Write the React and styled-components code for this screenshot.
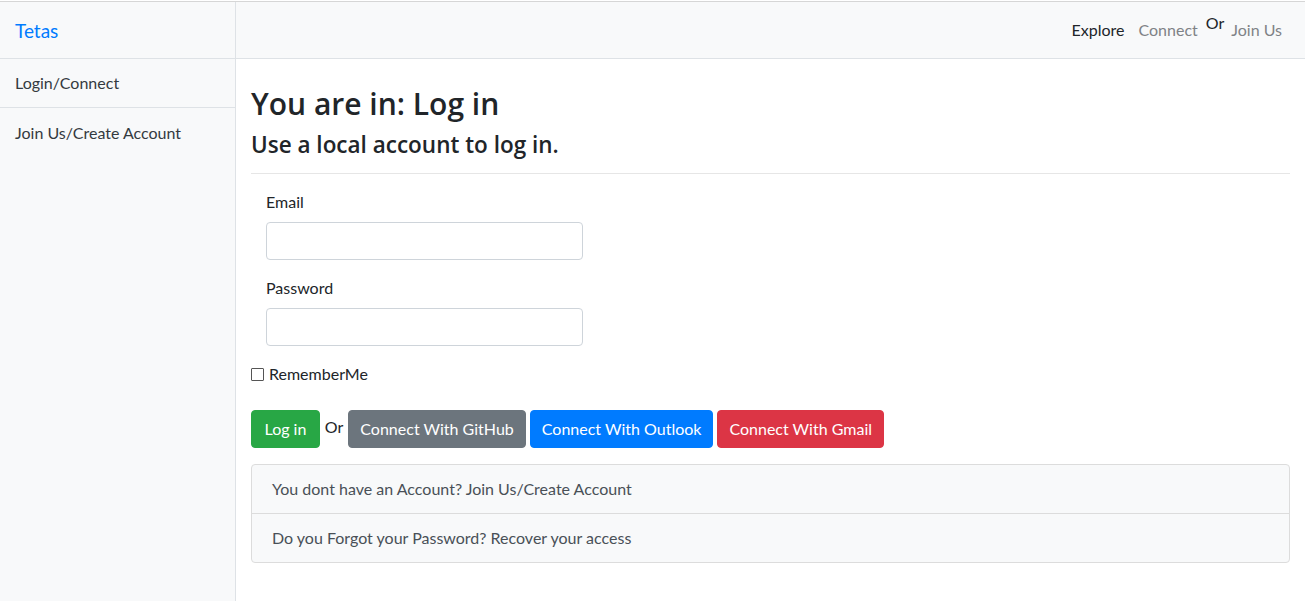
import React from "react";
import styled, { createGlobalStyle } from "styled-components";

const GlobalStyle = createGlobalStyle`
  html, body {
    margin: 0;
    padding: 0;
    background: #fff;
  }
  body {
    font-family: "Segoe UI", Lato, "Liberation Sans", sans-serif;
    font-size: 16px;
    line-height: 1.5;
    color: #212529;
    border-top: 1px solid #fff;
  }
  * {
    box-sizing: border-box;
  }
`;

const Page = styled.div`
  display: flex;
  min-height: 600px;
  border-top: 1px solid #d6d6d6;
`;

const Sidebar = styled.aside`
  width: 236px;
  flex-shrink: 0;
  background: #f8f9fa;
  border-right: 1px solid #dee2e6;
`;

const Brand = styled.div`
  height: 57px;
  display: flex;
  align-items: center;
  padding: 2px 0 0 15px;
  font-size: 19px;
  color: #007bff;
  border-bottom: 1px solid #dee2e6;
`;

const SideItem = styled.div`
  height: 49px;
  display: flex;
  align-items: center;
  padding-left: 15px;
  color: #343a40;
  border-bottom: ${(p) => (p.$last ? "none" : "1px solid #dee2e6")};
`;

const Right = styled.div`
  flex: 1;
  display: flex;
  flex-direction: column;
`;

const TopBar = styled.nav`
  height: 57px;
  background: #f8f9fa;
  border-bottom: 1px solid #dee2e6;
  display: flex;
  align-items: center;
  justify-content: flex-end;
  padding-right: 16px;
`;

const NavLink = styled.span`
  padding: 0 7px;
  color: ${(p) => (p.$active ? "#212529" : "#7f8286")};
`;

const NavOr = styled.span`
  position: relative;
  top: -7px;
  padding: 0 0 0 1px;
  color: #212529;
`;

const Content = styled.main`
  padding: 0 15px;
`;

const Title = styled.h2`
  margin: 27px 0 0;
  font-family: "Open Sans", Lato, sans-serif;
  font-size: 30px;
  font-weight: 600;
  line-height: 1.2;
`;

const Subtitle = styled.h4`
  margin: 9px 0 0;
  font-family: "Open Sans", Lato, sans-serif;
  font-size: 22.5px;
  font-weight: 600;
  line-height: 1.2;
`;

const Rule = styled.hr`
  margin: 15px 0 0;
  border: 0;
  border-top: 1px solid #e6e6e6;
`;

const Form = styled.form`
  padding: 16px 0 0;
`;

const Field = styled.div`
  padding: 0 15px;
  margin-bottom: 16px;
`;

const Label = styled.label`
  display: block;
  margin-bottom: 8px;
  color: #212529;
`;

const Input = styled.input`
  display: block;
  width: 317px;
  height: 38px;
  border: 1px solid #ced4da;
  border-radius: 4px;
  background: #fff;
  font: inherit;
  padding: 6px 12px;
`;

const Remember = styled.label`
  display: flex;
  align-items: center;
  gap: 5px;
  margin-top: 2px;
`;

const Box = styled.span`
  width: 13px;
  height: 13px;
  border: 1px solid #555;
  border-radius: 1px;
  background: #fff;
  display: inline-block;
`;

const Actions = styled.div`
  display: flex;
  align-items: center;
  gap: 4px;
  margin-top: 24px;
`;

const Button = styled.button`
  height: 38px;
  padding: 0 ${(p) => p.$px || 11}px;
  border: 1px solid ${(p) => p.$bg};
  background: ${(p) => p.$bg};
  color: #fff;
  border-radius: 4px;
  font: inherit;
`;

const Or = styled.span`
  position: relative;
  top: -2px;
  padding: 0 1px;
`;

const ListGroup = styled.div`
  margin-top: 16px;
  border: 1px solid #dcdcdc;
  border-radius: 4px;
  background: #f8f9fa;
`;

const ListItem = styled.div`
  height: ${(p) => (p.$last ? "48px" : "49px")};
  display: flex;
  align-items: center;
  padding-left: 20px;
  color: #495057;
  border-bottom: ${(p) => (p.$last ? "none" : "1px solid #dcdcdc")};
`;

export default function App() {
  return (
    <>
      <GlobalStyle />
      <Page>
        <Sidebar>
          <Brand>Tetas</Brand>
          <SideItem>Login/Connect</SideItem>
          <SideItem $last>Join Us/Create Account</SideItem>
        </Sidebar>
        <Right>
          <TopBar>
            <NavLink $active>Explore</NavLink>
            <NavLink>Connect</NavLink>
            <NavOr>Or</NavOr>
            <NavLink>Join Us</NavLink>
          </TopBar>
          <Content>
            <Title>You are in: Log in</Title>
            <Subtitle>Use a local account to log in.</Subtitle>
            <Rule />
            <Form onSubmit={(e) => e.preventDefault()}>
              <Field>
                <Label>Email</Label>
                <Input type="email" />
              </Field>
              <Field>
                <Label>Password</Label>
                <Input type="password" />
              </Field>
              <Remember>
                <Box />
                RememberMe
              </Remember>
              <Actions>
                <Button $bg="#28a745" $px={12.5}>Log in</Button>
                <Or>Or</Or>
                <Button $bg="#6c757d">Connect With GitHub</Button>
                <Button $bg="#007bff">Connect With Outlook</Button>
                <Button $bg="#dc3545">Connect With Gmail</Button>
              </Actions>
            </Form>
            <ListGroup>
              <ListItem>You dont have an Account? Join Us/Create Account</ListItem>
              <ListItem $last>Do you Forgot your Password? Recover your access</ListItem>
            </ListGroup>
          </Content>
        </Right>
      </Page>
    </>
  );
}
